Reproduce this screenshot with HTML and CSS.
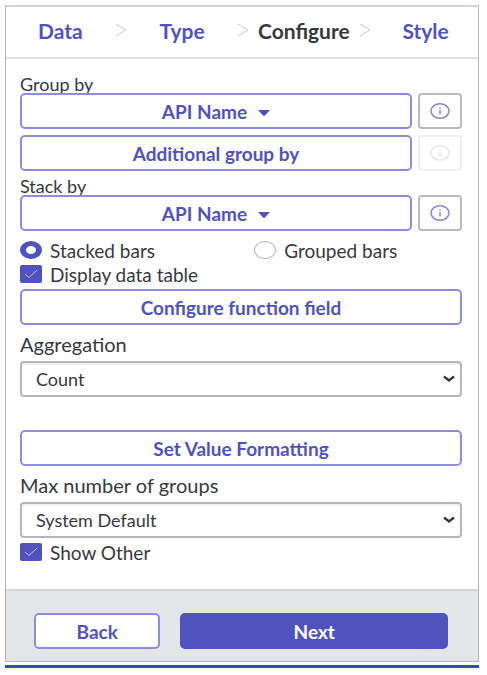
FILE: index.html
```
<!DOCTYPE html>
<html lang="en">
<head>
    <meta charset="UTF-8">
    <meta name="viewport" content="width=device-width, initial-scale=1.0">
    <title>Configure Chart</title>
    <link rel="stylesheet" href="styles.css">
</head>
<body>
    <div class="page">
        <div class="panel">
            <!-- Wizard steps -->
            <nav class="steps">
                <a href="#data">Data</a>
                <svg class="chevron" viewBox="0 0 12 14"><path d="M1 1 L11 7 L1 13"/></svg>
                <a href="#type">Type</a>
                <svg class="chevron" viewBox="0 0 12 14"><path d="M1 1 L11 7 L1 13"/></svg>
                <a href="#configure" class="current">Configure</a>
                <svg class="chevron" viewBox="0 0 12 14"><path d="M1 1 L11 7 L1 13"/></svg>
                <a href="#style">Style</a>
            </nav>

            <form class="content">
                <label class="field-label" for="groupBy">Group by</label>
                <div class="row">
                    <button type="button" id="groupBy" class="btn">API Name
                        <svg class="caret" viewBox="0 0 12 6"><path d="M0 0 H12 L7 5.5 Q6 6.3 5 5.5 Z"/></svg>
                    </button>
                    <button type="button" class="info" aria-label="Group by info">
                        <svg viewBox="0 0 20 16"><ellipse cx="10" cy="8" rx="9" ry="7.2"/><path d="M10 4.3 V5.7 M10 7 V11.5"/></svg>
                    </button>
                </div>
                <div class="row">
                    <button type="button" class="btn">Additional group by</button>
                    <button type="button" class="info" aria-label="Additional group info" disabled>
                        <svg viewBox="0 0 20 16"><ellipse cx="10" cy="8" rx="9" ry="7.2"/><path d="M10 4.3 V5.7 M10 7 V11.5"/></svg>
                    </button>
                </div>

                <label class="field-label stack-label" for="stackBy">Stack by</label>
                <div class="row">
                    <button type="button" id="stackBy" class="btn">API Name
                        <svg class="caret" viewBox="0 0 12 6"><path d="M0 0 H12 L7 5.5 Q6 6.3 5 5.5 Z"/></svg>
                    </button>
                    <button type="button" class="info" aria-label="Stack by info">
                        <svg viewBox="0 0 20 16"><ellipse cx="10" cy="8" rx="9" ry="7.2"/><path d="M10 4.3 V5.7 M10 7 V11.5"/></svg>
                    </button>
                </div>

                <div class="radios">
                    <label class="option"><input type="radio" name="bars" checked>Stacked bars</label>
                    <label class="option"><input type="radio" name="bars">Grouped bars</label>
                </div>
                <label class="option">
                    <span class="check">
                        <input type="checkbox" checked>
                        <svg viewBox="0 0 22 18"><path d="M5 9 L9 12.5 L17 5"/></svg>
                    </span>
                    Display data table
                </label>
                <div class="row">
                    <button type="button" class="btn">Configure function field</button>
                </div>

                <label class="select-label" for="aggregation">Aggregation</label>
                <div class="select">
                    <select id="aggregation">
                        <option>Count</option>
                    </select>
                    <svg viewBox="0 0 12 8"><path d="M1 1.5 L6 5.5 L11 1.5"/></svg>
                </div>

                <div class="row formatting">
                    <button type="button" class="btn">Set Value Formatting</button>
                </div>

                <label class="select-label" for="maxGroups">Max number of groups</label>
                <div class="select">
                    <select id="maxGroups">
                        <option>System Default</option>
                    </select>
                    <svg viewBox="0 0 12 8"><path d="M1 1.5 L6 5.5 L11 1.5"/></svg>
                </div>
                <label class="option other">
                    <span class="check">
                        <input type="checkbox" checked>
                        <svg viewBox="0 0 22 18"><path d="M5 9 L9 12.5 L17 5"/></svg>
                    </span>
                    Show Other
                </label>
            </form>

            <div class="footer">
                <button type="button" class="btn back">Back</button>
                <button type="button" class="btn next">Next</button>
            </div>
        </div>
        <hr class="rule">
    </div>
</body>
</html>
```
FILE: styles.css
```
* {
    box-sizing: border-box;
}

body {
    font-family: Lato, sans-serif;
    font-size: 19px;
    background-color: #fff;
    color: #363940;
    margin: 0;
}

.page {
    padding: 5px 8px 5px 5px;
}

.panel {
    border: 1px solid #b4b6bd;
    border-top: 2px solid #d3d4da;
}

/* Wizard steps */
.steps {
    display: grid;
    grid-template-columns: repeat(7, minmax(0, 1fr));
    align-items: center;
    justify-items: center;
    height: 52px;
    padding: 0 22px 4px 24px;
    border-bottom: 2px solid #dfe0e6;
}

.steps a {
    color: #5053bd;
    font-size: 21px;
    font-weight: bold;
    text-decoration: none;
}

.steps .current {
    color: #363940;
}

.chevron {
    width: 12px;
    height: 14px;
    fill: none;
    stroke: #c9cad3;
}

.content {
    padding: 16px 16px 25px 14px;
}

.field-label {
    display: block;
    font-size: 18px;
    line-height: 18px;
}

.stack-label {
    margin-top: 6px;
}

.row {
    display: flex;
    gap: 6px;
}

.row + .row {
    margin-top: 6px;
}

.btn {
    display: flex;
    flex: 1;
    align-items: center;
    justify-content: center;
    gap: 11px;
    height: 36px;
    padding: 0;
    font-family: inherit;
    font-size: 19px;
    font-weight: bold;
    color: #5053bd;
    background-color: #fff;
    border: 2px solid #8c8edb;
    border-radius: 5px;
    cursor: pointer;
}

.caret {
    width: 12px;
    height: 6px;
    margin-top: 4px;
    fill: #5053bd;
}

.info {
    display: flex;
    align-items: center;
    justify-content: center;
    width: 44px;
    height: 36px;
    padding: 0;
    background-color: #fff;
    border: 2px solid #b9bbc2;
    border-radius: 4px;
}

.info svg {
    width: 20px;
    height: 16px;
    fill: none;
    stroke: #8486d6;
    stroke-width: 1.5;
}

.info:disabled {
    border-color: #eeeef1;
}

.info:disabled svg {
    stroke: #e6e6f6;
}

/* Radios and checkboxes */
.radios {
    display: grid;
    grid-template-columns: 53% 1fr;
    margin-top: 7px;
}

.option {
    display: flex;
    align-items: center;
    gap: 8px;
    height: 24px;
    font-size: 19px;
}

.option input {
    appearance: none;
    width: 22px;
    height: 18px;
    margin: 0;
}

.option input[type="radio"] {
    border: 1px solid #b0b2ba;
    border-radius: 50%;
}

.option input[type="radio"]:checked {
    border-color: #5053bd;
    border-width: 5px 6px;
}

.check {
    display: grid;
}

.check input,
.check svg {
    grid-area: 1 / 1;
    width: 22px;
    height: 18px;
}

.check input {
    background-color: #5053bd;
    border-radius: 2px;
}

.check svg {
    fill: none;
    stroke: #c3c4ee;
    pointer-events: none;
}

.option + .row {
    margin-top: 3px;
}

/* Dropdowns */
.select-label {
    display: block;
    padding: 7px 0 5px;
    font-size: 20px;
    line-height: 24px;
}

.select {
    display: grid;
    align-items: center;
}

.select select,
.select svg {
    grid-area: 1 / 1;
}

.select select {
    appearance: none;
    width: 100%;
    height: 36px;
    padding: 0 14px;
    font-family: inherit;
    font-size: 18px;
    color: #363940;
    background-color: #fff;
    border: 2px solid #b4b6bd;
    border-radius: 4px;
    box-shadow: inset 0 2px 1px #f0f0f2;
}

.select svg {
    justify-self: end;
    width: 12px;
    height: 8px;
    margin-right: 7px;
    fill: none;
    stroke: #363940;
    stroke-width: 2.4;
    pointer-events: none;
}

.formatting {
    margin-top: 33px;
}

.other {
    margin-top: 2px;
}

/* Footer */
.footer {
    display: flex;
    gap: 20px;
    padding: 22px 30px 12px 28px;
    background-color: #e4e5e9;
    border-top: 2px solid #d5d6da;
}

.footer .back {
    flex: 125;
}

.footer .next {
    flex: 269;
    color: #fff;
    background-color: #5053bd;
    border-color: #5053bd;
}

.rule {
    height: 3px;
    margin: 3px 0 0;
    border: 0;
    background-color: #2f5597;
}
```
